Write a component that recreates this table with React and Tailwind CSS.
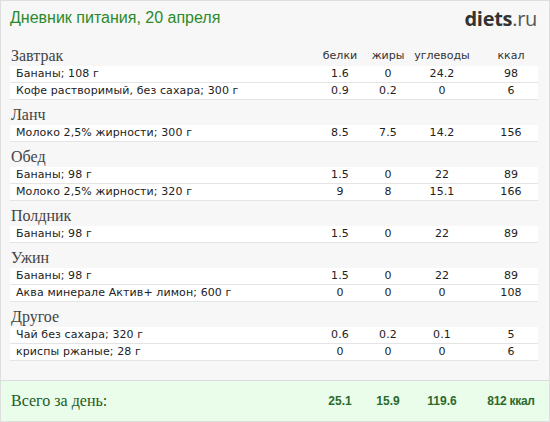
import React from 'react';

const meals = [
    {
        title: 'Завтрак',
        items: [
            ['Бананы; 108 г', '1.6', '0', '24.2', '98'],
            ['Кофе растворимый, без сахара; 300 г', '0.9', '0.2', '0', '6'],
        ],
    },
    { title: 'Ланч', items: [['Молоко 2,5% жирности; 300 г', '8.5', '7.5', '14.2', '156']] },
    {
        title: 'Обед',
        items: [
            ['Бананы; 98 г', '1.5', '0', '22', '89'],
            ['Молоко 2,5% жирности; 320 г', '9', '8', '15.1', '166'],
        ],
    },
    { title: 'Полдник', items: [['Бананы; 98 г', '1.5', '0', '22', '89']] },
    {
        title: 'Ужин',
        items: [
            ['Бананы; 98 г', '1.5', '0', '22', '89'],
            ['Аква минерале Актив+ лимон; 600 г', '0', '0', '0', '108'],
        ],
    },
    {
        title: 'Другое',
        items: [
            ['Чай без сахара; 320 г', '0.6', '0.2', '0.1', '5'],
            ['криспы ржаные; 28 г', '0', '0', '0', '6'],
        ],
    },
];

const serif = "font-['Liberation_Serif',serif]";
const sans = "font-['DejaVu_Sans',sans-serif]";
const cols = 'grid grid-cols-[1fr_48px_48px_60px_66px]';

const App = () => {
    return (
        <div className="w-[550px] h-[422px] bg-[#f7f7f7] border border-[#dedede] flex flex-col overflow-hidden">
            <div className="flex items-start justify-between h-[40px] px-[9px] pt-[7px]">
                <h1 className="text-[16px] leading-[20px] text-[#2b8a2b] font-['Liberation_Sans',sans-serif]">
                    Дневник питания, 20 апреля
                </h1>
                <div className="text-[20px] leading-[22px] font-['Open_Sans',sans-serif] tracking-[-0.3px] mr-[3px]">
                    <span className="font-bold text-[#333]">diets</span>
                    <span className="text-[#555]">.ru</span>
                </div>
            </div>

            <div className="pl-[9px] pr-[11px]">
                {meals.map((meal, i) => (
                    <div key={meal.title}>
                        <div className={`${cols} h-[25px] items-end`}>
                            <div className={`${serif} text-[16px] leading-[20px] text-[#444] pl-[1px]`}>{meal.title}</div>
                            {i === 0 && (
                                <>
                                    <div className={`${sans} text-[11px] leading-[20px] text-[#333] text-center`}>белки</div>
                                    <div className={`${sans} text-[11px] leading-[20px] text-[#333] text-center`}>жиры</div>
                                    <div className={`${sans} text-[11px] leading-[20px] text-[#333] text-center`}>углеводы</div>
                                    <div className={`${sans} text-[11px] leading-[20px] text-[#333] text-center pl-[12px]`}>ккал</div>
                                </>
                            )}
                        </div>
                        {meal.items.map((row) => (
                            <div
                                key={row[0]}
                                className={`${cols} ${sans} h-[17px] items-center bg-white border-b border-[#e4e4e4] text-[11px] text-[#222] tracking-[0.1px]`}
                            >
                                <div className="pl-[6px] whitespace-nowrap">{row[0]}</div>
                                <div className="text-center">{row[1]}</div>
                                <div className="text-center">{row[2]}</div>
                                <div className="text-center">{row[3]}</div>
                                <div className="text-center pl-[12px]">{row[4]}</div>
                            </div>
                        ))}
                    </div>
                ))}
            </div>

            <div className="mt-auto h-[41px] bg-[#eafdea] border-t border-[#dcdcdc] pl-[10px] pr-[11px]">
                <div className={`${cols} h-full items-center pb-[1px]`}>
                    <div className={`${serif} text-[16px] text-[#1d5b1d]`}>Всего за день:</div>
                    <div className="text-center font-['Liberation_Sans',sans-serif] font-bold text-[12px] text-[#2c6a2c]">25.1</div>
                    <div className="text-center font-['Liberation_Sans',sans-serif] font-bold text-[12px] text-[#2c6a2c]">15.9</div>
                    <div className="text-center font-['Liberation_Sans',sans-serif] font-bold text-[12px] text-[#2c6a2c]">119.6</div>
                    <div className="text-center pl-[12px] font-['Liberation_Sans',sans-serif] font-bold text-[12px] text-[#2c6a2c] tracking-[-0.3px]">812 ккал</div>
                </div>
            </div>
        </div>
    );
};

export default App;
